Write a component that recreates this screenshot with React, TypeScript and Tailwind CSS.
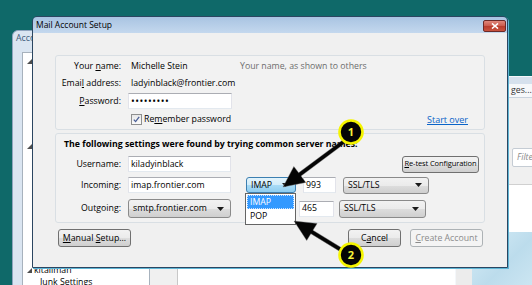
import type { ReactNode } from "react";

// Windows 7 style "Mail Account Setup" dialog with two callouts

const FONT = "font-['Open_Sans',sans-serif]";

function Caret() {
  return (
    <svg width="7" height="4" viewBox="0 0 7 4" className="shrink-0">
      <path d="M0 0h7L3.5 4z" fill="#1a1a1a" />
    </svg>
  );
}

function U({ children }: { children: ReactNode }) {
  return <span className="underline underline-offset-[1px]">{children}</span>;
}

function Label({ children }: { children: ReactNode }) {
  return <div className="w-[65px] shrink-0 text-right whitespace-nowrap">{children}</div>;
}

function Input({ className, children }: { className: string; children?: ReactNode }) {
  return (
    <div
      className={`flex items-center shrink-0 bg-white border border-[#abadb3] border-l-[#e2e3ea] border-r-[#e2e3ea] border-b-[#e3e9ef] pl-[2px] whitespace-nowrap ${className}`}
    >
      {children}
    </div>
  );
}

function Combo({ className, children, blue }: { className: string; children: ReactNode; blue?: boolean }) {
  return (
    <div
      className={`flex items-center justify-between shrink-0 rounded-[3px] border pl-[4px] pr-[6px] whitespace-nowrap ${
        blue
          ? "border-[#3c7fb1] bg-[linear-gradient(#e3f4fc_0%,#d1ecfa_50%,#a9dbf6_51%,#8ecdf0_100%)]"
          : "border-[#8a8a8a] bg-[linear-gradient(#f2f2f2_0%,#ebebeb_50%,#dddddd_51%,#cfcfcf_100%)]"
      } ${className}`}
    >
      <span>{children}</span>
      <Caret />
    </div>
  );
}

function Button({ className, children, disabled }: { className: string; children: ReactNode; disabled?: boolean }) {
  return (
    <div
      className={`flex items-center justify-center shrink-0 rounded-[3px] border whitespace-nowrap ${
        disabled
          ? "border-[#adb2b5] bg-[#f4f4f4] text-[#8b8b8b]"
          : "border-[#707070] bg-[linear-gradient(#f2f2f2_0%,#ebebeb_50%,#dddddd_51%,#cfcfcf_100%)]"
      } ${className}`}
    >
      {children}
    </div>
  );
}

function TreeArrow() {
  return (
    <svg width="5" height="5" viewBox="0 0 5 5" className="shrink-0">
      <path d="M5 0v5H0z" fill="#4d4d4d" />
    </svg>
  );
}

function BackWindowLeft() {
  return (
    <div className="absolute left-[12px] top-[30px] w-[444px] h-[262px] rounded-t-[6px] border border-[#8ea4be] bg-[#dae5f1] flex flex-col">
      <div className="h-[15px] pl-[3px] flex items-center text-[#3d5a78]">Account Settings</div>
      <div className="flex-1 flex pt-[6px] pl-[9px]">
        <div className="w-[128px] bg-white border border-[#a7b2bd] flex flex-col pl-[4px] pt-[5px]">
          <div className="h-[6px] flex items-center"><TreeArrow /></div>
          <div className="h-[6px] mt-[79px] flex items-center"><TreeArrow /></div>
          <div className="mt-[116px] h-[11px] flex items-center gap-[2px]">
            <TreeArrow />
            <span>kitallman</span>
          </div>
          <div className="h-[12px] flex items-center pl-[13px]">Junk Settings</div>
        </div>
        <div className="w-[28px] bg-[#f0f0f0] border-r border-[#c8c8c8]" />
        <div className="flex-1 bg-white" />
      </div>
    </div>
  );
}

function BackWindowRight() {
  return (
    <div className="absolute left-[455px] top-[76px] w-[90px] h-[215px] border-t border-l border-[#f4f7fa] bg-[#f0f0f0] flex flex-col">
      <div className="h-[7px] bg-[#d6e1ed]" />
      <div className="h-[14px] bg-[#f6f8fa] border-b border-[#c9d3de] flex items-center pl-[55px] text-[#333]">
        ges...
      </div>
      <div className="h-[50px]" />
      <div className="h-[19px] ml-[56px] bg-white border border-[#c5ccd4] rounded-[2px] flex items-center pl-[4px] italic text-[#8a8a8a]">
        Filte
      </div>
      <div className="h-[18px] border-b border-[#d0d0d0]" />
      <div className="h-[47px] bg-white" />
      <div className="flex-1 bg-[linear-gradient(135deg,#d7edf7_0%,#bcdcec_50%,#d2e9f4_100%)] border-l-[16px] border-[#ececec]" />
    </div>
  );
}

function Dialog() {
  return (
    <div className="absolute left-[32px] top-[16px] w-[476px] h-[252px] rounded-t-[5px] border border-[#2b4661] shadow-[1px_1px_0_#5fb6d6] flex flex-col overflow-hidden">
      {/* title bar */}
      <div className="h-[16px] shrink-0 flex items-center pl-[3px] bg-[linear-gradient(#a9c4e2,#c4d8ee)]">
        <span className="text-[8.5px]">Mail Account Setup</span>
        <div className="ml-auto mr-[1px] mt-[2px] w-[23px] h-[12px] rounded-[2px] border border-[#6b2a28] bg-[linear-gradient(#e0877b_0%,#cb5a4b_50%,#b83b2c_51%,#c9533e_100%)] flex items-center justify-center">
          <svg width="8" height="6" viewBox="0 0 8 6">
            <path d="M1 0.5l6 5M7 0.5l-6 5" stroke="#fff" strokeWidth="1.6" />
          </svg>
        </div>
      </div>

      {/* body */}
      <div className="flex-1 bg-[#f0f0f0] px-[22px] pt-[22px] flex flex-col">
        {/* identity group */}
        <div className="h-[75px] shrink-0 rounded-[3px] border border-[#d9dfe4] bg-[#f2f2f2] pt-[3px] flex flex-col gap-[3px]">
          <div className="h-[14px] flex items-center">
            <Label>
              Your <U>n</U>ame:
            </Label>
            <div className="ml-[7px] w-[112px] pl-[3px] shrink-0">Michelle Stein</div>
            <div className="text-[#6d6d6d] whitespace-nowrap">Your name, as shown to others</div>
          </div>
          <div className="h-[14px] flex items-center">
            <Label>
              Emai<U>l</U> address:
            </Label>
            <div className="ml-[7px] pl-[3px]">ladyinblack@frontier.com</div>
          </div>
          <div className="h-[16px] flex items-center">
            <Label>
              <U>P</U>assword:
            </Label>
            <Input className="ml-[7px] w-[104px] h-[16px] text-[10px] tracking-[0.5px] leading-none">
              •••••••••
            </Input>
          </div>
          <div className="h-[14px] flex items-center">
            <div className="w-[65px] shrink-0" />
            <div className="ml-[10px] w-[11px] h-[11px] shrink-0 border border-[#8e8f8f] bg-[linear-gradient(#e8e8e8,#fbfbfb)] flex items-center justify-center">
              <svg width="7" height="7" viewBox="0 0 7 7">
                <path d="M0.8 3.6l1.8 2L6.2 0.8" stroke="#4a5f97" strokeWidth="1.3" fill="none" />
              </svg>
            </div>
            <div className="ml-[2px]">
              Re<U>m</U>ember password
            </div>
            <div className="ml-auto mr-[16px] text-[9px] text-[#0a64c8] underline underline-offset-[1px]">Start over</div>
          </div>
        </div>

        {/* server group */}
        <div className="mt-[3px] h-[90px] shrink-0 rounded-[3px] border border-[#d9dfe4] bg-[#f2f2f2] pt-[4px] flex flex-col">
          <div className="h-[12px] pl-[8px] font-bold whitespace-nowrap flex items-center">
            The following settings were found by trying common server names:
          </div>
          <div className="mt-[6px] h-[16px] flex items-center">
            <Label>Username:</Label>
            <Input className="ml-[7px] w-[103px] h-[16px]">kiladyinblack</Input>
            <Button className="ml-auto mr-[5px] w-[77px] h-[17px] text-[7.5px] tracking-[-0.1px]">
              <span>
                <U>R</U>e-test Configuration
              </span>
            </Button>
          </div>
          <div className="mt-[5px] h-[16px] flex items-center">
            <Label>Incoming:</Label>
            <Input className="ml-[7px] w-[103px] h-[16px]">imap.frontier.com</Input>
            <Combo blue className="ml-[15px] w-[50px] h-[16px]">
              IMAP
            </Combo>
            <Input className="ml-[7px] w-[33px] h-[16px]">993</Input>
            <Combo className="ml-[7px] w-[86px] h-[17px]">SSL/TLS</Combo>
          </div>
          <div className="mt-[6px] h-[19px] flex items-center">
            <Label>Outgoing:</Label>
            <Combo className="ml-[7px] w-[103px] h-[19px]">smtp.frontier.com</Combo>
            <Input className="ml-[68px] w-[35px] h-[16px]">465</Input>
            <Combo className="ml-[5px] w-[87px] h-[18px]">SSL/TLS</Combo>
          </div>
        </div>

        {/* buttons */}
        <div className="mt-[6px] h-[18px] flex items-center">
          <Button className="ml-[3px] w-[73px] h-[18px]">
            <span>
              <U>M</U>anual <U>S</U>etup...
            </span>
          </Button>
          <Button className="ml-auto w-[53px] h-[18px]">
            <span>
              C<U>a</U>ncel
            </span>
          </Button>
          <Button disabled className="ml-[9px] mr-[2px] w-[73px] h-[18px]">
            <span>
              <U>C</U>reate Account
            </span>
          </Button>
        </div>
      </div>
    </div>
  );
}

function ComboList() {
  return (
    <div className="absolute left-[245px] top-[193px] w-[51px] h-[32px] bg-white border border-[#646464] flex flex-col p-[1px]">
      <div className="h-[14px] bg-[#3399ff] text-white pl-[2px] flex items-center border border-dotted border-[#cce4ff]">IMAP</div>
      <div className="h-[14px] pl-[3px] flex items-center">POP</div>
    </div>
  );
}

function arrowPoints(x1: number, y1: number, x2: number, y2: number, shaft = 2, headLen = 21, headW = 10) {
  const dx = x2 - x1;
  const dy = y2 - y1;
  const len = Math.hypot(dx, dy);
  const ux = dx / len;
  const uy = dy / len;
  const px = -uy;
  const py = ux;
  const bx = x2 - ux * headLen;
  const by = y2 - uy * headLen;
  const pts = [
    [x1 + px * shaft, y1 + py * shaft],
    [bx + px * shaft, by + py * shaft],
    [bx + px * headW, by + py * headW],
    [x2, y2],
    [bx - px * headW, by - py * headW],
    [bx - px * shaft, by - py * shaft],
    [x1 - px * shaft, y1 - py * shaft],
  ];
  return pts.map((p) => p.join(",")).join(" ");
}

function Annotations() {
  return (
    <svg className="absolute inset-0 pointer-events-none" width="532" height="285" viewBox="0 0 532 285">
      <polygon points={arrowPoints(346, 140, 283, 187)} fill="#050505" stroke="#777" strokeWidth="0.4" />
      <polygon points={arrowPoints(343, 251, 294, 221)} fill="#050505" stroke="#777" strokeWidth="0.4" />
      <circle cx="351" cy="132" r="11.5" fill="#050505" stroke="#f5f500" strokeWidth="2.6" />
      <text x="351" y="136" textAnchor="middle" fontSize="11" fontWeight="700" fill="#f5f53a" fontFamily="'Open Sans',sans-serif">
        1
      </text>
      <circle cx="351" cy="255" r="11.5" fill="#050505" stroke="#f5f500" strokeWidth="2.6" />
      <text x="351" y="259" textAnchor="middle" fontSize="11" fontWeight="700" fill="#f5f53a" fontFamily="'Open Sans',sans-serif">
        2
      </text>
    </svg>
  );
}

export default function App() {
  return (
    <div className={`relative w-[532px] h-[285px] overflow-hidden bg-[#0f6969] ${FONT} text-[8.75px] leading-none text-black`}>
      <BackWindowLeft />
      <BackWindowRight />
      <Dialog />
      <ComboList />
      <Annotations />
    </div>
  );
}
